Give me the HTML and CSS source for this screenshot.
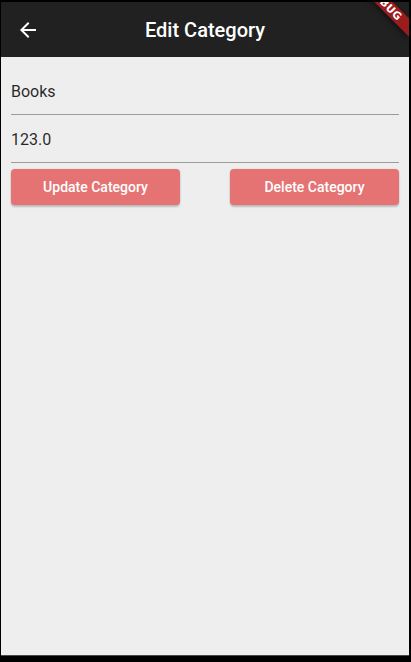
FILE: index.html
```html
<!DOCTYPE html>
<html>
<head>
<meta charset="utf-8">
<link rel="stylesheet" href="styles.css">
</head>
<body>
<div class="device">
  <div class="app">
    <header class="appbar">
      <button class="back" aria-label="Back">
        <svg width="24" height="24" viewBox="0 0 24 24"><path fill="#fff" d="M20 11H7.83l5.59-5.59L12 4l-8 8 8 8 1.41-1.41L7.83 13H20v-2z"/></svg>
      </button>
      <h1 class="title">Edit Category</h1>
    </header>
    <main class="content">
      <div class="field"><span class="value">Books</span></div>
      <div class="field"><span class="value">123.0</span></div>
      <div class="actions">
        <button class="btn">Update Category</button>
        <button class="btn">Delete Category</button>
      </div>
    </main>
    <div class="banner"><span>DEBUG</span></div>
  </div>
</div>
</body>
</html>
```
FILE: styles.css
```css
html, body {
  margin: 0;
  padding: 0;
  background: #000;
  height: 100%;
}
.device {
  padding: 2px 2px 0 1px;
  height: 662px;
  box-sizing: border-box;
}
.app {
  position: relative;
  overflow: hidden;
  width: 408px;
  height: 654px;
  background: #eeeeee;
  border-bottom: 1px solid #4a4a4a;
  box-sizing: border-box;
  font-family: Roboto, "Noto Sans", sans-serif;
  display: flex;
  flex-direction: column;
}
.appbar {
  height: 55px;
  background: #212121;
  display: flex;
  align-items: center;
  position: relative;
  flex: none;
}
.back {
  background: none;
  border: 0;
  padding: 0;
  margin-left: 15px;
  width: 24px;
  height: 24px;
  display: flex;
}
.title {
  position: absolute;
  left: 0;
  right: 0;
  margin: 0;
  text-align: center;
  color: #fff;
  font-size: 20px;
  font-weight: 500;
  line-height: 24px;
  pointer-events: none;
}
.content {
  padding: 10px 10px 0 10px;
}
.field {
  height: 48px;
  box-sizing: border-box;
  border-bottom: 1px solid #9b9b9b;
  display: flex;
  align-items: center;
}
.value {
  font-size: 16px;
  color: rgba(0, 0, 0, 0.85);
  line-height: 20px;
  margin-top: 3px;
}
.actions {
  display: flex;
  justify-content: space-between;
  padding-top: 6px;
}
.btn {
  width: 169px;
  height: 36px;
  border: 0;
  border-radius: 4px;
  background: #e57373;
  color: #fff;
  font-family: Roboto, "Noto Sans", sans-serif;
  font-size: 14px;
  font-weight: 500;
  box-shadow: 0 2px 2px rgba(0,0,0,0.2), 0 0 2px rgba(0,0,0,0.12);
  padding: 0;
}
.banner {
  position: absolute;
  width: 80px;
  height: 13px;
  left: 344px;
  top: -5px;
  transform: rotate(45deg);
  background: rgba(168, 28, 28, 0.9);
  box-shadow: 0 2px 6px rgba(0,0,0,0.5);
  display: flex;
  align-items: center;
  justify-content: center;
}
.banner span {
  color: #fff;
  font-family: "DejaVu Sans", sans-serif;
  font-weight: bold;
  font-size: 10.5px;
  line-height: 13px;
  letter-spacing: 0.3px;
}
```
